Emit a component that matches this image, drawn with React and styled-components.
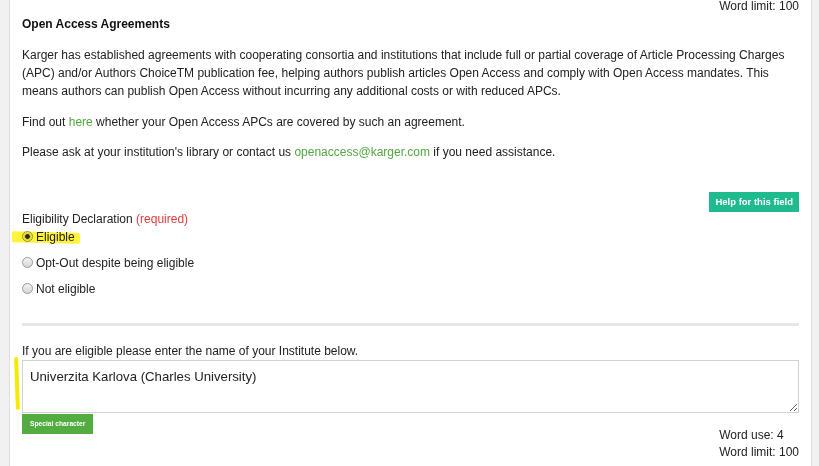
import styled, { createGlobalStyle } from "styled-components"

const GlobalStyle = createGlobalStyle`
    html, body {
        margin: 0;
        padding: 0;
        background: #f1f1f1;
    }
    body {
        font-family: "Liberation Sans", Arial, sans-serif;
        font-size: 12px;
        color: #222;
    }
`

const Page = styled.div`
    min-height: 100vh;
    padding: 0 7px 0 9px;
    background: #f1f1f1;
    overflow: hidden;
`

const Panel = styled.div`
    display: flow-root;
    min-height: 100vh;
    background: #fff;
    border-left: 1px solid #dedede;
    border-right: 1px solid #dedede;
    padding: 0 12px;
    line-height: 18px;
`

const WordCount = styled.div`
    display: flex;
    justify-content: flex-end;
    margin-top: ${({top}) => top || '0px'};
    line-height: ${({lh}) => lh || '18px'};
`

const Title = styled.h3`
    margin: 0 0 13px;
    font-size: 12px;
    font-weight: bold;
    color: #111;
    line-height: 18px;
`

const Text = styled.p`
    margin: 0 0 12.5px;
    font-size: 12px;
    line-height: 18px;
`

const Link = styled.a`
    color: #52a83e;
    text-decoration: none;
`

const Field = styled.div`
    margin-top: 30.5px;
    display: flex;
    flex-direction: column;
`

const HelpButton = styled.button`
    align-self: flex-end;
    height: 20px;
    padding: 0 6px;
    border: none;
    background: #1fba8e;
    color: #fff;
    font-family: "Liberation Sans", Arial, sans-serif;
    font-size: 9.5px;
    font-weight: bold;
    line-height: 20px;
    cursor: pointer;
`

const FieldLabel = styled.div`
    margin-top: -2px;
    line-height: 18px;
`

const Required = styled.span`
    color: #e8393b;
`

const RadioList = styled.div`
    display: flex;
    flex-direction: column;
    gap: 8px;
`

const RadioRow = styled.label`
    position: relative;
    display: flex;
    align-items: center;
    height: 18px;
    font-size: 12px;
`

const Radio = styled.input`
    appearance: none;
    width: 11px;
    height: 11px;
    margin: -1px 3px 0 0;
    border: 1px solid #9a9a9a;
    border-radius: 50%;
    background: linear-gradient(#f4f4f4, #d6d6d6);
    box-sizing: border-box;
    &:checked {
        background: radial-gradient(circle, #2a2a2a 0 2px, #cfcfcf 2.6px, #f2f2f2 4px);
    }
`

const Highlight = styled.span`
    position: absolute;
    left: -10px;
    top: 4px;
    width: 68px;
    height: 11px;
    background: #fff43a;
    mix-blend-mode: multiply;
    border-radius: 2px 3px 3px 1px;
    transform: skewY(1.5deg);
    pointer-events: none;
`

const Divider = styled.hr`
    margin: 25px 0 16px;
    height: 3px;
    border: none;
    background: #e6e6e6;
`

const InputLabel = styled.div`
    line-height: 18px;
`

const TextBox = styled.div`
    position: relative;
`

const Marker = styled.span`
    position: absolute;
    left: -7px;
    top: -3px;
    width: 4px;
    height: 53px;
    background: #f7ea00;
    border-radius: 3px;
    transform: rotate(-2deg);
`

const Area = styled.textarea`
    display: block;
    width: 100%;
    height: 53px;
    box-sizing: border-box;
    margin: 0;
    padding: 8px 7px;
    border: 1px solid #d2d2d2;
    font-family: "Liberation Sans", Arial, sans-serif;
    font-size: 13.2px;
    color: #222;
    background: #fff;
    outline: none;
`

const Footer = styled.div`
    display: flex;
    justify-content: space-between;
    align-items: flex-start;
`

const SpecialButton = styled.button`
    margin-top: 1px;
    height: 20px;
    padding: 0 8px;
    border: none;
    background: #52ac40;
    color: #fff;
    font-family: "Liberation Sans", Arial, sans-serif;
    font-size: 6.7px;
    font-weight: bold;
    cursor: pointer;
`

const Counts = styled.div`
    margin-top: 14.5px;
    line-height: 17px;
`

const options = [
    { id: 'eligible', label: 'Eligible', checked: true },
    { id: 'optout', label: 'Opt-Out despite being eligible' },
    { id: 'not', label: 'Not eligible' },
]

const App = () => {
    return (
        <Page>
            <GlobalStyle />
            <Panel>
                <WordCount top="-3px">
                    <div>Word limit: 100</div>
                </WordCount>
                <Title>Open Access Agreements</Title>
                <Text>
                    Karger has established agreements with cooperating consortia and institutions that include full or partial coverage of Article Processing Charges (APC) and/or Authors ChoiceTM publication fee, helping authors publish articles Open Access and comply with Open Access mandates. This means authors can publish Open Access without incurring any additional costs or with reduced APCs.
                </Text>
                <Text>
                    Find out <Link href="#">here</Link> whether your Open Access APCs are covered by such an agreement.
                </Text>
                <Text>
                    Please ask at your institution's library or contact us <Link href="#">openaccess@karger.com</Link> if you need assistance.
                </Text>

                <Field>
                    <HelpButton>Help for this field</HelpButton>
                    <FieldLabel>
                        Eligibility Declaration <Required>(required)</Required>
                    </FieldLabel>
                    <RadioList>
                        {options.map((opt) => (
                            <RadioRow key={opt.id}>
                                {opt.checked && <Highlight />}
                                <Radio type="radio" name="eligibility" defaultChecked={opt.checked} />
                                {opt.label}
                            </RadioRow>
                        ))}
                    </RadioList>
                </Field>

                <Divider />

                <InputLabel>If you are eligible please enter the name of your Institute below.</InputLabel>
                <TextBox>
                    <Marker />
                    <Area defaultValue="Univerzita Karlova (Charles University)" />
                </TextBox>
                <Footer>
                    <SpecialButton>Special character</SpecialButton>
                    <Counts>
                        <div>Word use: 4</div>
                        <div>Word limit: 100</div>
                    </Counts>
                </Footer>
            </Panel>
        </Page>
    )
}

export default App
